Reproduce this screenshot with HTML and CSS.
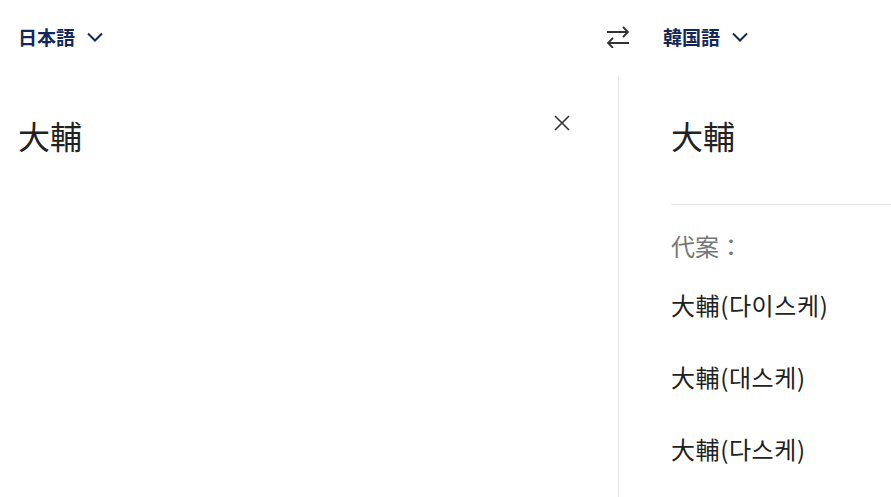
FILE: index.html
```html
<!DOCTYPE html>
<html lang="ja">
<head>
    <meta charset="UTF-8">
    <meta name="viewport" content="width=device-width, initial-scale=1.0">
    <title>翻訳</title>
    <link rel="stylesheet" href="styles.css">
</head>
<body>
    <div class="translator">
        <!-- Language selector bar -->
        <div class="lang-bar">
            <div class="lang-source">
                <button class="lang-btn">日本語
                    <svg class="chevron" width="16" height="10" viewBox="0 0 16 10"><path d="M1 1.5 L8 8.5 L15 1.5" fill="none" stroke="currentColor" stroke-width="2"/></svg>
                </button>
            </div>
            <button class="swap-btn" title="入れ替え">
                <svg width="24" height="24" viewBox="0 0 24 24" fill="none" stroke="#333" stroke-width="1.8">
                    <path d="M1 8 H22 M17 3 L22 8 L17 13"/>
                    <path d="M23 19 H2 M7 14 L2 19 L7 24"/>
                </svg>
            </button>
            <div class="lang-target">
                <button class="lang-btn">韓国語
                    <svg class="chevron" width="16" height="10" viewBox="0 0 16 10"><path d="M1 1.5 L8 8.5 L15 1.5" fill="none" stroke="currentColor" stroke-width="2"/></svg>
                </button>
            </div>
        </div>

        <div class="panes">
            <div class="pane pane-source">
                <div class="source-text">大輔</div>
                <button class="clear-btn" title="クリア">
                    <svg width="16" height="16" viewBox="0 0 16 16"><path d="M1 1 L15 15 M15 1 L1 15" stroke="#333" stroke-width="1.6"/></svg>
                </button>
            </div>
            <div class="pane pane-target">
                <div class="target-text">大輔</div>
                <div class="alternatives">
                    <div class="alt-label">代案：</div>
                    <div class="alt-item">大輔(다이스케)</div>
                    <div class="alt-item">大輔(대스케)</div>
                    <div class="alt-item">大輔(다스케)</div>
                </div>
            </div>
        </div>
    </div>
</body>
</html>
```

FILE: styles.css
```css
body {
    margin: 0;
    font-family: "Noto Sans CJK JP", "Noto Sans", sans-serif;
    color: #222;
    background-color: #fff;
    overflow: hidden;
}
button {
    font-family: inherit;
    background: none;
    border: none;
    padding: 0;
    cursor: pointer;
}
.translator {
    height: 497px;
    display: flex;
    flex-direction: column;
}
.lang-bar {
    display: flex;
    align-items: center;
    height: 72px;
    flex-shrink: 0;
}
.lang-source {
    width: 606px;
    padding-left: 18px;
    box-sizing: border-box;
}
.lang-target {
    padding-left: 33px;
}
.lang-btn {
    display: flex;
    align-items: center;
    gap: 12px;
    font-size: 19px;
    font-weight: 700;
    color: #13275a;
}
.chevron {
    margin-top: 1px;
}
.swap-btn {
    width: 24px;
    height: 24px;
    display: flex;
}
.panes {
    display: flex;
    flex: 1;
    margin-top: 4px;
}
.pane-source {
    width: 618px;
    display: flex;
    align-items: flex-start;
    justify-content: space-between;
    padding: 35px 48px 0 18px;
    box-sizing: border-box;
}
.source-text, .target-text {
    font-size: 32px;
    line-height: 48px;
}
.clear-btn {
    width: 16px;
    height: 16px;
    margin-top: 4px;
    display: flex;
}
.pane-target {
    flex: 1;
    border-left: 1px solid #e6e6e6;
    padding: 35px 0 0 52px;
}
.alternatives {
    margin-top: 45px;
    border-top: 1px solid #e6e6e6;
    padding-top: 23px;
}
.alt-label {
    font-size: 24px;
    line-height: 36px;
    color: #777;
    margin-bottom: 5px;
}
.alt-item {
    font-size: 24px;
    line-height: 36px;
    letter-spacing: 0.6px;
    padding: 18px 0;
}
```
